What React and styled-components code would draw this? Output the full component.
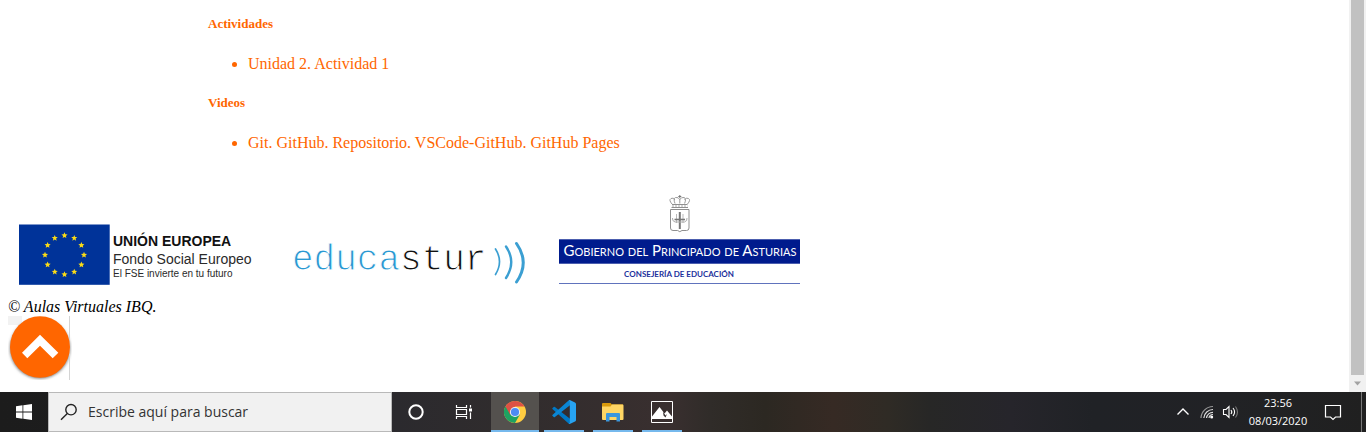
import React from "react";
import styled, { createGlobalStyle } from "styled-components";

const GlobalStyle = createGlobalStyle`
  * { box-sizing: border-box; }
  body { margin: 0; background: #fff; }
`;

const Screen = styled.div`
  display: flex;
  flex-direction: column;
  min-height: 100vh;
`;

const Viewport = styled.div`
  display: flex;
  flex: 1;
`;

const Page = styled.div`
  flex: 1;
  min-width: 0;
  padding: 16px 8px 12px;
  font: 16px/18px "Liberation Serif", "Times New Roman", serif;
  color: #000;
`;

const Units = styled.main`
  padding-left: 200px;
  color: #ff6600;
`;

const SectionTitle = styled.h5`
  margin: 0 0 23px;
  font-size: 13px;
  line-height: 16px;
  font-weight: bold;
`;

const LinkList = styled.ul`
  margin: 0 0 22px;
  padding-left: 40px;
`;

const PlainLink = styled.a`
  color: inherit;
  text-decoration: none;
`;

const Logos = styled.div`
  display: flex;
  align-items: flex-end;
  gap: 33px;
  padding: 20px 0 12px 11px;
`;

const Logo = styled.svg`
  display: block;
  flex: none;
`;

const SansText = styled.text`
  font-family: "Liberation Sans", Arial, sans-serif;
  font-size: ${(p) => p.$size}px;
  font-weight: ${(p) => (p.$bold ? 700 : 400)};
  fill: ${(p) => (p.$bold ? "#111" : "#2a2a2a")};
`;

const MonoText = styled.text`
  font-family: "Liberation Mono", "Courier New", monospace;
  font-size: 36px;
  stroke: #fff;
  stroke-width: 1px;
`;

const CapsText = styled.text`
  font-family: Lato, sans-serif;
  font-size: ${(p) => p.$size}px;
  font-weight: ${(p) => (p.$bold ? 700 : 400)};
  font-variant: ${(p) => (p.$small ? "small-caps" : "normal")};
  text-anchor: middle;
`;

const Copyright = styled.em`
  display: block;
`;

const TopLink = styled.a`
  display: block;
  width: 64px;
  height: 64px;
`;

const Scrollbar = styled.div`
  display: flex;
  flex-direction: column;
  align-items: center;
  width: 17px;
  background: #f1f1f1;
`;

const Thumb = styled.div`
  flex: 1;
  width: 13px;
  background: #c1c1c1;
`;

const ArrowDown = styled.svg`
  display: block;
  width: 17px;
  height: 17px;
`;

const Taskbar = styled.footer`
  display: flex;
  height: 40px;
  color: #fff;
  font-family: "Open Sans", "Segoe UI", sans-serif;
  background: linear-gradient(
    90deg,
    #1c1c1c 0%, #1e1e20 20%, #2b2a2e 29%, #302c2d 37%, #392f2f 49%,
    #302c29 52%, #2c2822 56%, #362a24 61%, #2f2b25 65%, #272726 68%,
    #26252b 74%, #202226 80%, #212225 90%, #202020 100%
  );
`;

const TaskButton = styled.button`
  display: flex;
  align-items: center;
  justify-content: center;
  width: 48px;
  height: 40px;
  padding: 0;
  border: 0;
  color: #fff;
  background: transparent;
`;

const Search = styled.label`
  display: flex;
  align-items: center;
  flex: 0 1 344px;
  gap: 10px;
  padding-left: 11px;
  color: #222;
  background: #f1f1f1;
  border: 1px solid #b9b9b9;
`;

const SearchInput = styled.input`
  flex: 1;
  min-width: 0;
  padding: 0;
  border: 0;
  outline: 0;
  background: transparent;
  font: 14px/20px "Open Sans", "Segoe UI", sans-serif;
  color: #333;
  &::placeholder { color: #333; opacity: 1; }
`;

const Apps = styled.div`
  display: flex;
  gap: 1px;
  margin-left: 3px;
`;

const AppButton = styled(TaskButton)`
  background:
    linear-gradient(#76b9ed, #76b9ed) bottom / ${(p) => (p.$active ? 48 : 40)}px 2px no-repeat,
    ${(p) => (p.$active ? "#54514e" : "transparent")};
`;

const Tray = styled.div`
  display: flex;
  align-items: center;
  margin-left: auto;
`;

const TrayButton = styled(TaskButton)`
  width: 24px;
`;

const Clock = styled.time`
  width: 70px;
  font-size: 11px;
  line-height: 18px;
  text-align: center;
`;

const ShowDesktop = styled.button`
  width: 5px;
  height: 40px;
  padding: 0;
  border: 0;
  border-left: 1px solid #777;
  background: transparent;
`;

const NoticeButton = styled(TaskButton)`
  width: 40px;
  margin-right: 8px;
`;

const sections = [
  { title: "Actividades", links: ["Unidad 2. Actividad 1"] },
  { title: "Videos", links: ["Git. GitHub. Repositorio. VSCode-GitHub. GitHub Pages"] },
];

const starPoints = (cx, cy, r) =>
  Array.from({ length: 10 }, (_, i) => {
    const a = (Math.PI / 5) * i - Math.PI / 2;
    const d = i % 2 ? r * 0.45 : r;
    return `${(cx + d * Math.cos(a)).toFixed(2)},${(cy + d * Math.sin(a)).toFixed(2)}`;
  }).join(" ");

const EuropeLogo = () => (
  <Logo width="240" height="62" role="img" aria-label="Unión Europea">
    <rect y="0.5" width="90.7" height="60.3" fill="#003399" />
    {Array.from({ length: 12 }, (_, i) => {
      const a = (Math.PI / 6) * i;
      return (
        <polygon
          key={i}
          fill="#fbdc16"
          points={starPoints(45.5 + 19.5 * Math.cos(a), 31 + 19.5 * Math.sin(a), 3.2)}
        />
      );
    })}
    <SansText x="94" y="22" $size={14} $bold>UNIÓN EUROPEA</SansText>
    <SansText x="94" y="40" $size={14}>Fondo Social Europeo</SansText>
    <SansText x="94" y="53" $size={10}>El FSE invierte en tu futuro</SansText>
  </Logo>
);

const EducasturLogo = () => (
  <Logo width="234" height="46" role="img" aria-label="Educastur">
    <MonoText x="0" y="30">
      <tspan fill="#2a98d2">educa</tspan>
      <tspan fill="#111">stur</tspan>
    </MonoText>
    <g fill="none" stroke="#3b9fd2" strokeLinecap="round">
      <path d="M203.5 9Q211.5 21.5 203.5 34.5" strokeWidth="1.7" />
      <path d="M214 6.5Q224.5 22 214 38" strokeWidth="2.4" />
      <path d="M224.5 3.5Q238 22.5 224.5 42" strokeWidth="3" />
    </g>
  </Logo>
);

const AsturiasLogo = () => (
  <Logo width="241" height="92" role="img" aria-label="Gobierno del Principado de Asturias">
    <g fill="none" stroke="#8f8f8f">
      <path d="M111.5 15.5h18.5v18.5q0 2.5-2.5 2.5h-4.5l-2.2 1.2-2.2-1.2h-4.6q-2.5 0-2.5-2.5z" />
      <path d="M120.800 18v17" strokeWidth="2" stroke="#777" />
      <path d="M117.500 20v9M124 20v9" stroke="#bbb" />
      <path d="M115.500 25.500h10.500" strokeWidth="1.600" stroke="#777" />
      <path d="M113.500 24q-.5 3 2.500 4h9.500q3-1 2.500-4" stroke="#aaa" />
      <path d="M112.500 13.500h16.500M113 10.500h15.500" />
      <path d="M113 12h15.500" stroke="#aaa" strokeDasharray="2 1" />
      <g stroke="#9a9a9a">
        <path d="M113 10q-3.500-4-1-5.500 2.500-1.500 4 1.500M128.500 10q3.500-4 1-5.500-2.500-1.500-4 1.500" />
        <path d="M116 9.500q-2-5 .5-6 3-.5 4.300 2 1.300-2.500 4.300-2 2.500 1 .5 6M120.800 5v4.500" />
        <path d="M120.800 1v3M119.300 2.500h3" stroke="#777" />
      </g>
    </g>
    <rect y="45.300" width="241" height="24.400" fill="#001b8d" />
    <CapsText x="121" y="62" $size={15} $small fill="#fff">Gobierno del Principado de Asturias</CapsText>
    <CapsText x="120" y="83" $size={8} $bold fill="#1c309c">CONSEJERÍA DE EDUCACIÓN</CapsText>
    <rect y="89" width="241" height="1" fill="#6073bd" />
  </Logo>
);

const ToTopIcon = () => (
  <svg width="64" height="64" aria-hidden="true">
    <defs>
      <filter id="soft" x="-20%" y="-20%" width="140%" height="140%">
        <feGaussianBlur stdDeviation="1.5" />
      </filter>
    </defs>
    <path d="M0 0h14v9H0z" fill="#f2f2f2" />
    <circle cx="32" cy="32.5" r="30" fill="#777" filter="url(#soft)" />
    <path d="M61.5 0v64" stroke="#d4d4d4" />
    <ellipse cx="32" cy="31" rx="30" ry="30.8" fill="#ff6600" />
    <path d="M32 18.700L50.300 36.700 44.700 42.200 32 29.700 19.300 42.200 14 36.700z" fill="#fff" />
  </svg>
);

const WindowsIcon = () => (
  <svg width="16" height="16" fill="#fff" aria-hidden="true">
    <path d="M0 2.200L6.500 1.300V7.500H0zM7.300 1.200L16 0v7.500H7.300zM0 8.400h6.500v6.300L0 13.800zM7.300 8.400H16V16l-8.700-1.200z" />
  </svg>
);

const SearchIcon = () => (
  <svg width="18" height="18" fill="none" stroke="#222" strokeWidth="1.4" aria-hidden="true">
    <circle cx="11" cy="6.7" r="5.2" />
    <path d="M7.300 10.500L1 16.800" />
  </svg>
);

const CortanaIcon = () => (
  <svg width="16" height="16" aria-hidden="true">
    <circle cx="8" cy="8" r="6.7" fill="none" stroke="#fff" strokeWidth="2" />
  </svg>
);

const TaskViewIcon = () => (
  <svg width="18" height="16" fill="none" stroke="#fff" strokeWidth="1.2" aria-hidden="true">
    <path d="M1.500 1v2.500h10V1M1.500 15v-2.500h10V15M1.500 5.500h10v5h-10zM15.500 1v2.500M15.500 8.500V15" />
    <path d="M14 4.500h3v3h-3z" fill="#fff" stroke="none" />
  </svg>
);

const ChromeIcon = () => (
  <svg width="22" height="22" viewBox="0 0 22 22" aria-hidden="true">
    <circle cx="11" cy="11" r="11" fill="#ffcd41" />
    <path d="M11 11L1.470 5.500A11 11 0 0 0 11 22L15.800 13.700z" fill="#1da262" />
    <path d="M6.200 13.700L1.470 5.500A11 11 0 0 1 20.530 5.500H11z" fill="#dd5145" />
    <circle cx="11" cy="11" r="5.1" fill="#f1f1f1" />
    <circle cx="11" cy="11" r="4.1" fill="#4c8bf5" />
  </svg>
);

const CodeIcon = () => (
  <svg width="24" height="24" viewBox="0 0 24 24" aria-hidden="true">
    <path d="M0.400 8.200L1.700 7q.6-.4 1.200 0L18 18.700V23.800q-1 .2-1.700-.5L.4 8.900q-.3-.4 0-.7z" fill="#0078c4" />
    <path d="M0.400 15.800L1.700 17q.6.4 1.200 0L18 5.300V.2q-1-.2-1.700.5L.4 15.100q-.3.400 0 .7z" fill="#0a86d4" />
    <path d="M17.800 23.900q-.8.100-1.500-.6 1.200.7 1.500-.8V1.500q-.3-1.500-1.500-.8.700-.7 1.500-.6l5.200 2.300q1 .5 1 1.500v16.200q0 1-1 1.500z" fill="#27a3f2" />
  </svg>
);

const FolderIcon = () => (
  <svg width="22" height="20" viewBox="0 0 22 20" aria-hidden="true">
    <path d="M0 2q0-1 1-1h7.500l1.500 1.500h11V6H0z" fill="#d99a0c" />
    <path d="M0 4.500h8.500l1.500-2h10.500q1 0 1 1V17q0 1-1 1H1q-1 0-1-1z" fill="#ffd664" />
    <path d="M4 19.500V12q0-1 1-1h12q1 0 1 1v7.500h-3.500V15h-7v4.500z" fill="#3b97de" />
  </svg>
);

const PhotosIcon = () => (
  <svg width="22" height="22" aria-hidden="true">
    <path d="M.5.500h21v21H.5z" fill="none" stroke="#fff" />
    <path d="M1 15.500L8.500 6l5 6.500 2.500-3L21 15.500V18H1z" fill="#fff" />
    <path d="M12 10.500l2.500 4 1.500-1.500-1.500 3.500-2-2z" fill="#393131" />
  </svg>
);

const ChevronIcon = () => (
  <svg width="14" height="14" fill="none" stroke="#fff" strokeWidth="1.4" aria-hidden="true">
    <path d="M1.500 9.500L7 4l5.500 5.500" />
  </svg>
);

const WifiIcon = () => (
  <svg width="14" height="14" fill="none" stroke="#ddd" strokeWidth="1.2" aria-hidden="true">
    <path d="M1 13A12 12 0 0 1 13 1.500" stroke="#999" />
    <path d="M3.800 13A9.200 9.200 0 0 1 13 4.500M6.500 13A6.500 6.500 0 0 1 13 7.300M9 13A4 4 0 0 1 13 9.500" />
    <circle cx="11.7" cy="12" r="1.5" fill="#fff" stroke="none" />
  </svg>
);

const SoundIcon = () => (
  <svg width="18" height="14" fill="none" stroke="#fff" strokeWidth="1.1" aria-hidden="true">
    <path d="M1.500 4.500h2.500L7 1.500v11L4 9.500H1.500z" />
    <path d="M9 5q1.600 2 0 4M11 3q3.200 4 0 8" />
    <path d="M13.500 1.500q4 5.500 0 11" stroke="#777" />
  </svg>
);

const NoticeIcon = () => (
  <svg width="18" height="18" fill="none" stroke="#fff" strokeWidth="1.2" aria-hidden="true">
    <path d="M1.500 2.500h15v11.500h-5l-2.500 2.500-2.500-2.500h-5z" />
  </svg>
);

const apps = [
  { name: "Google Chrome", Icon: ChromeIcon, active: true },
  { name: "Visual Studio Code", Icon: CodeIcon },
  { name: "Explorador de archivos", Icon: FolderIcon },
  { name: "Fotos", Icon: PhotosIcon },
];

export default function App() {
  return (
    <Screen>
      <GlobalStyle />
      <Viewport>
        <Page>
          <Units>
            {sections.map(({ title, links }) => (
              <section key={title}>
                <SectionTitle>{title}</SectionTitle>
                <LinkList>
                  {links.map((text) => (
                    <li key={text}><PlainLink href="#">{text}</PlainLink></li>
                  ))}
                </LinkList>
              </section>
            ))}
          </Units>
          <Logos>
            <EuropeLogo />
            <EducasturLogo />
            <AsturiasLogo />
          </Logos>
          <Copyright>© Aulas Virtuales IBQ.</Copyright>
          <TopLink href="#" aria-label="Volver arriba"><ToTopIcon /></TopLink>
        </Page>
        <Scrollbar aria-hidden="true">
          <Thumb />
          <ArrowDown><path d="M5 6.500h7L8.500 10.500z" fill="#a3a3a3" /></ArrowDown>
        </Scrollbar>
      </Viewport>
      <Taskbar>
        <TaskButton aria-label="Inicio"><WindowsIcon /></TaskButton>
        <Search>
          <SearchIcon />
          <SearchInput type="text" aria-label="Buscar" placeholder="Escribe aquí para buscar" />
        </Search>
        <TaskButton aria-label="Cortana"><CortanaIcon /></TaskButton>
        <TaskButton aria-label="Vista de tareas"><TaskViewIcon /></TaskButton>
        <Apps>
          {apps.map(({ name, Icon, active }) => (
            <AppButton key={name} aria-label={name} $active={active}><Icon /></AppButton>
          ))}
        </Apps>
        <Tray>
          <TrayButton aria-label="Iconos ocultos"><ChevronIcon /></TrayButton>
          <TrayButton aria-label="Red"><WifiIcon /></TrayButton>
          <TrayButton aria-label="Volumen"><SoundIcon /></TrayButton>
          <Clock dateTime="2020-03-08T23:56">23:56<br />08/03/2020</Clock>
          <NoticeButton aria-label="Notificaciones"><NoticeIcon /></NoticeButton>
          <ShowDesktop aria-label="Mostrar escritorio" />
        </Tray>
      </Taskbar>
    </Screen>
  );
}
